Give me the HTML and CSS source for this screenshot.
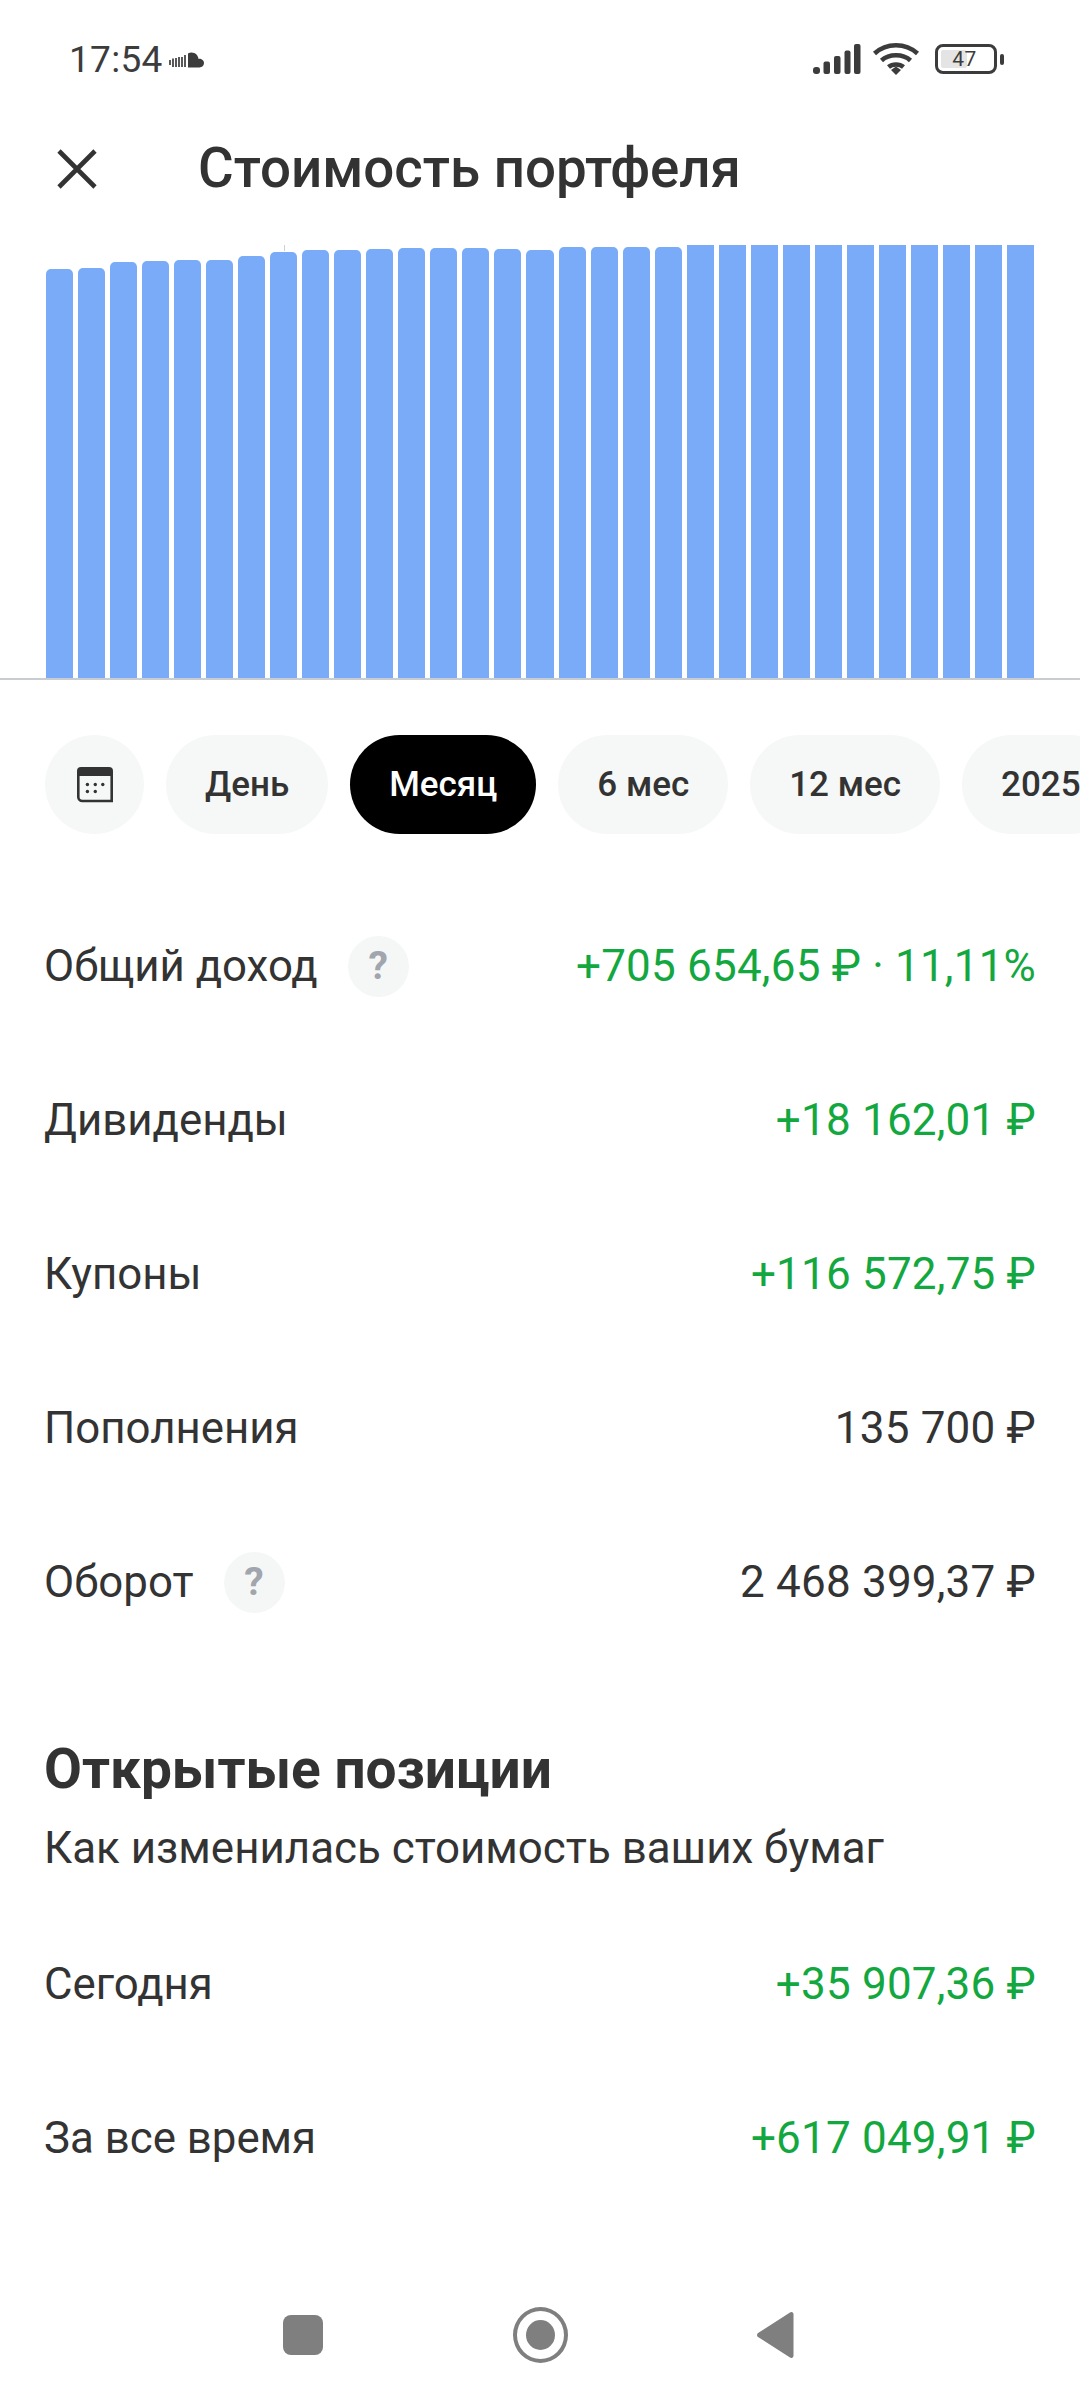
FILE: index.html
```html
<!DOCTYPE html>
<html lang="ru">
<head>
<meta charset="utf-8">
<title>Стоимость портфеля</title>
<link rel="stylesheet" href="styles.css">
</head>
<body>
<div class="screen">
  <div class="status">
    <div class="status-left">
      <span class="clock">17:54</span>
      <svg class="sc" viewBox="0 0 36 20" width="36" height="20"><path d="M19 2.500c1-.6 2.300-1 3.500-1 3.700 0 6.700 2.800 7 6.400 2.300-.6 5.500 1 5.500 4.200 0 2.600-2 4.400-4.500 4.400H19z" fill="#3c3c3c"/><path d="M1 9v5M4 7.500v8.500M7 7v9M10 6v10M13 6v10M16 4v12" stroke="#3c3c3c" stroke-width="1.700" fill="none"/></svg>
    </div>
    <div class="status-right">
      <svg class="signal" width="48" height="32" viewBox="0 0 48 32"><g fill="#3c3c3c"><rect x="0" y="24" width="7" height="7" rx="3"/><rect x="10.500" y="18.500" width="6.500" height="12.500" rx="2"/><rect x="21" y="13" width="6.500" height="18" rx="2"/><rect x="31.500" y="7.500" width="6" height="23.500" rx="2"/><rect x="41" y="1" width="6.500" height="30" rx="2"/></g></svg>
      <svg class="wifi" width="48" height="34" viewBox="0 0 48 34"><g fill="none" stroke="#3c3c3c" stroke-width="4.500"><path d="M2.500 11.500C14.500 .5 33.500 .5 45.500 11.500"/><path d="M9.500 18.500C17 11.500 31 11.500 38.500 18.500"/><path d="M16.500 25C20.500 21.500 27.500 21.500 31.500 25"/></g><path d="M19 28l5-3.500 5 3.500-5 5z" fill="#3c3c3c"/></svg>
      <div class="battery">
        <div class="bat-body"><span class="bat-fill"></span><span class="bat-num">47</span></div>
        <span class="bat-tip"></span>
      </div>
    </div>
  </div>

  <header class="topbar">
    <svg class="close" width="40" height="40" viewBox="0 0 40 40"><path d="M2 2l36 36M38 2L2 38" stroke="#333" stroke-width="4.600" fill="none"/></svg>
    <h1 class="title">Стоимость портфеля</h1>
  </header>

  <div class="chart">
    <div class="bars">
      <i class="bar" style="height:409px"></i><i class="bar" style="height:410px"></i><i class="bar" style="height:416px"></i><i class="bar" style="height:417px"></i><i class="bar" style="height:418px"></i><i class="bar" style="height:418px"></i><i class="bar" style="height:422px"></i><i class="bar mark" style="height:426px"></i><i class="bar" style="height:428px"></i><i class="bar" style="height:428px"></i><i class="bar" style="height:429px"></i><i class="bar" style="height:430px"></i><i class="bar" style="height:430px"></i><i class="bar" style="height:430px"></i><i class="bar" style="height:429px"></i><i class="bar" style="height:428px"></i><i class="bar" style="height:431px"></i><i class="bar" style="height:431px"></i><i class="bar" style="height:431px"></i><i class="bar" style="height:431px"></i><i class="bar flat" style="height:433px"></i><i class="bar flat" style="height:433px"></i><i class="bar flat" style="height:433px"></i><i class="bar flat" style="height:433px"></i><i class="bar flat" style="height:433px"></i><i class="bar flat" style="height:433px"></i><i class="bar flat" style="height:433px"></i><i class="bar flat" style="height:433px"></i><i class="bar flat" style="height:433px"></i><i class="bar flat" style="height:433px"></i><i class="bar flat" style="height:433px"></i>
    </div>
  </div>

  <div class="chips">
    <div class="chip chip-icon">
      <svg width="36" height="36" viewBox="0 0 36 36"><path d="M0 4a4 4 0 0 1 4-4h28a4 4 0 0 1 4 4v5H0z" fill="#333"/><path d="M1.300 8v22a4 4 0 0 0 4 4h29.400V8" fill="none" stroke="#333" stroke-width="2.600"/><g fill="#333"><circle cx="10.400" cy="17.500" r="1.700"/><circle cx="18.300" cy="17.500" r="1.700"/><circle cx="25.800" cy="17.500" r="1.700"/><circle cx="10.400" cy="24.500" r="1.700"/><circle cx="18.300" cy="24.500" r="1.700"/></g></svg>
    </div>
    <div class="chip">День</div>
    <div class="chip active">Месяц</div>
    <div class="chip">6 мес</div>
    <div class="chip">12 мес</div>
    <div class="chip">2025</div>
  </div>

  <section class="rows">
    <div class="row"><div class="label">Общий доход<span class="help">?</span></div><div class="val pos">+705 654,65 ₽ · 11,11%</div></div>
    <div class="row"><div class="label">Дивиденды</div><div class="val pos">+18 162,01 ₽</div></div>
    <div class="row"><div class="label">Купоны</div><div class="val pos">+116 572,75 ₽</div></div>
    <div class="row"><div class="label">Пополнения</div><div class="val">135 700 ₽</div></div>
    <div class="row"><div class="label">Оборот<span class="help">?</span></div><div class="val">2 468 399,37 ₽</div></div>
  </section>

  <section class="open">
    <h2 class="open-title">Открытые позиции</h2>
    <p class="open-sub">Как изменилась стоимость ваших бумаг</p>
    <div class="row"><div class="label">Сегодня</div><div class="val pos">+35 907,36 ₽</div></div>
    <div class="row"><div class="label">За все время</div><div class="val pos">+617 049,91 ₽</div></div>
  </section>

  <nav class="navbar">
    <span class="nav-square"></span>
    <span class="nav-home"><span class="nav-dot"></span></span>
    <svg class="nav-back" width="38" height="48" viewBox="0 0 38 48"><path d="M34 1.500a2.200 2.200 0 0 1 3.500 2v41a2.200 2.200 0 0 1-3.500 2L2 26a2.500 2.500 0 0 1 0-4z" fill="#7f7f7f"/></svg>
  </nav>
</div>
</body>
</html>
```
FILE: styles.css
```css
* { box-sizing: border-box; }
html, body { margin: 0; padding: 0; background: #fff; }
body { font-family: Roboto, "Noto Sans", sans-serif; color: #333; }
.screen { width: 1080px; height: 2400px; overflow: hidden; display: flex; flex-direction: column; }

.status { height: 118px; padding: 40px 76px 0 69px; display: flex; justify-content: space-between; align-items: flex-start; }
.status-left { display: flex; align-items: center; gap: 6px; }
.clock { font-size: 37px; line-height: 40px; color: #3c3c3c; letter-spacing: .3px; }
.sc { margin-top: 1px; }
.status-right { display: flex; align-items: center; gap: 13px; height: 34px; margin-top: 2px; }
.signal { margin-right: -2px; }
.wifi { margin-left: 0; }
.battery { display: flex; align-items: center; gap: 3px; margin-left: 2px; }
.bat-body { position: relative; width: 62px; height: 30px; border: 3.500px solid #3c3c3c; border-radius: 8px; display: flex; align-items: center; justify-content: center; }
.bat-fill { position: absolute; left: 3px; top: 3px; bottom: 3px; width: 26px; background: #e4e4e4; border-radius: 2px; }
.bat-num { position: relative; font-size: 21px; color: #3c3c3c; letter-spacing: .5px; margin-right: 3px; }
.bat-tip { width: 4px; height: 11px; border-radius: 2px; background: #3c3c3c; }

.topbar { height: 100px; display: flex; align-items: center; padding: 0 0 0 57px; margin-bottom: 6px; }
.close { flex: none; margin-top: 2px; }
.title { margin: 0 0 0 101px; font-size: 54.700px; line-height: 60px; font-weight: 500; color: #333; }

.chart { height: 456px; flex: none; border-bottom: 2px solid #c9ccd0; padding: 0 46px; display: flex; align-items: flex-end; }
.bars { width: 100%; display: flex; align-items: flex-end; gap: 5px; }
.bar { flex: 1; background: #7aabf8; border-radius: 5px 5px 0 0; position: relative; }
.bar.flat { border-radius: 0; }
.bar.mark::before { content: ""; position: absolute; left: 50%; top: -7px; width: 1px; height: 6px; background: #cfcfcf; }

.chips { display: flex; gap: 22px; padding: 55px 0 0 45px; height: 155px; flex: none; width: 1080px; overflow: hidden; }
.chip { flex: none; height: 99px; padding: 0 39px; border-radius: 50px; background: #f6f8f7; font-size: 35px; font-weight: 500; display: flex; align-items: center; color: #333; }
.chip-icon { width: 99px; padding: 0; justify-content: center; }
.chip.active { background: #000; color: #fff; }

.rows { padding-top: 54px; flex: none; }
.row { height: 154px; padding: 0 44px; display: flex; justify-content: space-between; align-items: center; }
.label { font-size: 43.800px; display: flex; align-items: center; color: #333; }
.val { font-size: 44px; letter-spacing: .2px; color: #333; white-space: nowrap; }
.val.pos { color: #13a83f; }
.help { width: 61px; height: 61px; border-radius: 50%; background: #f5f7f7; color: #a0a5ae; font-size: 39px; font-weight: 700; margin-left: 30px; display: flex; align-items: center; justify-content: center; }

.open { padding-top: 79px; flex: none; }
.open-title { margin: 0; padding: 0 44px; font-size: 55px; line-height: 62px; font-weight: 700; color: #333; }
.open-sub { margin: 23px 0 34px; padding: 0 44px; font-size: 43.900px; line-height: 50px; color: #333; }

.navbar { margin-top: auto; height: 138px; flex: none; display: flex; justify-content: center; align-items: center; gap: 190px; padding: 8px 3px 0 0; }
.nav-square { width: 40px; height: 40px; border-radius: 8px; background: #7f7f7f; }
.nav-home { width: 55px; height: 56px; border-radius: 50%; border: 4px solid #7f7f7f; display: flex; align-items: center; justify-content: center; }
.nav-dot { width: 29px; height: 30px; border-radius: 50%; background: #7f7f7f; }
.nav-back { margin-left: -2px; }
```
